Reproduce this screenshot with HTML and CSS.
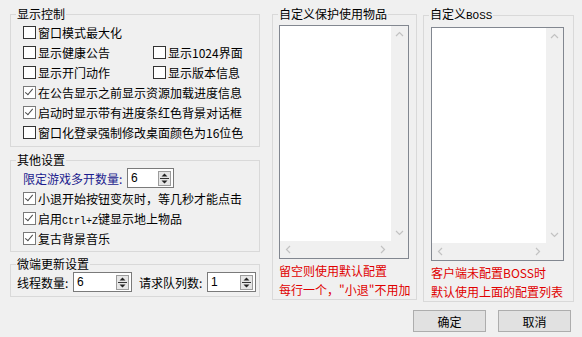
FILE: index.html
```html
<!DOCTYPE html>
<html lang="zh-CN">
<head>
    <meta charset="UTF-8">
    <title>设置</title>
    <link rel="stylesheet" href="styles.css">
</head>
<body>
    <div class="dialog">
        <div class="main">
            <div class="left">
                <fieldset class="group">
                    <legend>显示控制</legend>
                    <div class="inner g-display">
                        <div class="row"><label class="chk"><span class="box"></span>窗口模式最大化</label></div>
                        <div class="row"><label class="chk col1"><span class="box"></span>显示健康公告</label><label class="chk"><span class="box"></span>显示1024界面</label></div>
                        <div class="row"><label class="chk col1"><span class="box"></span>显示开门动作</label><label class="chk"><span class="box"></span>显示版本信息</label></div>
                        <div class="row"><label class="chk"><span class="box on"></span>在公告显示之前显示资源加载进度信息</label></div>
                        <div class="row"><label class="chk"><span class="box on"></span>启动时显示带有进度条红色背景对话框</label></div>
                        <div class="row"><label class="chk"><span class="box"></span>窗口化登录强制修改桌面颜色为16位色</label></div>
                    </div>
                </fieldset>

                <fieldset class="group g-other">
                    <legend>其他设置</legend>
                    <div class="inner g-display-2">
                        <div class="row">
                            <span class="lbl blue w104">限定游戏多开数量:</span>
                            <span class="spin w47"><span class="val">6</span><span class="spin-btn"><svg width="13" height="15" viewBox="0 0 13 15"><rect x=".5" y=".5" width="12" height="14" fill="#e6e6e6" stroke="#9c9c9c"/><path d="M6.5 2.5L3.5 5.5h6z M3.5 9.5h6l-3 3z" fill="#222"/><path d="M2 7.5h9" stroke="#333"/></svg></span></span>
                        </div>
                        <div class="row"><label class="chk"><span class="box on"></span>小退开始按钮变灰时，等几秒才能点击</label></div>
                        <div class="row"><label class="chk"><span class="box on"></span><span>启用<span class="mono">Ctrl+Z</span>键显示地上物品</span></label></div>
                        <div class="row"><label class="chk"><span class="box on"></span>复古背景音乐</label></div>
                    </div>
                </fieldset>

                <fieldset class="group g-update">
                    <legend>微端更新设置</legend>
                    <div class="inner g-update-body">
                        <div class="row">
                            <span class="lbl w56">线程数量:</span>
                            <span class="spin w59"><span class="val">6</span><span class="spin-btn"><svg width="13" height="15" viewBox="0 0 13 15"><rect x=".5" y=".5" width="12" height="14" fill="#e6e6e6" stroke="#9c9c9c"/><path d="M6.5 2.5L3.5 5.5h6z M3.5 9.5h6l-3 3z" fill="#222"/><path d="M2 7.5h9" stroke="#333"/></svg></span></span>
                            <span class="lbl w68 gap7">请求队列数:</span>
                            <span class="spin w49"><span class="val">1</span><span class="spin-btn"><svg width="13" height="15" viewBox="0 0 13 15"><rect x=".5" y=".5" width="12" height="14" fill="#e6e6e6" stroke="#9c9c9c"/><path d="M6.5 2.5L3.5 5.5h6z M3.5 9.5h6l-3 3z" fill="#222"/><path d="M2 7.5h9" stroke="#333"/></svg></span></span>
                        </div>
                    </div>
                </fieldset>
            </div>

            <fieldset class="group side side-items">
                <legend>自定义保护使用物品</legend>
                <div class="inner side-body">
                    <div class="list w130">
                        <div class="list-area"></div>
                        <div class="vbar">
                            <svg width="17" height="17" viewBox="0 0 17 17"><path d="M5 10l3.5-3.5 3.5 3.5" stroke="#c2c2c2" fill="none" stroke-width="1.2"/></svg>
                            <svg width="17" height="17" viewBox="0 0 17 17"><path d="M5 7l3.5 3.5 3.5-3.5" stroke="#c2c2c2" fill="none" stroke-width="1.2"/></svg>
                        </div>
                        <div class="hbar">
                            <svg width="17" height="17" viewBox="0 0 17 17"><path d="M10 5l-3.5 3.5 3.5 3.5" stroke="#c2c2c2" fill="none" stroke-width="1.2"/></svg>
                            <svg width="17" height="17" viewBox="0 0 17 17"><path d="M7 5l3.5 3.5-3.5 3.5" stroke="#c2c2c2" fill="none" stroke-width="1.2"/></svg>
                        </div>
                        <div class="corner"></div>
                    </div>
                    <div class="note">留空则使用默认配置<br>每行一个，"小退"不用加</div>
                </div>
            </fieldset>

            <fieldset class="group side side-boss">
                <legend>自定义<span class="mono mono-lg">BOSS</span></legend>
                <div class="inner side-body">
                    <div class="list w133">
                        <div class="list-area"></div>
                        <div class="vbar">
                            <svg width="17" height="17" viewBox="0 0 17 17"><path d="M5 10l3.5-3.5 3.5 3.5" stroke="#c2c2c2" fill="none" stroke-width="1.2"/></svg>
                            <svg width="17" height="17" viewBox="0 0 17 17"><path d="M5 7l3.5 3.5 3.5-3.5" stroke="#c2c2c2" fill="none" stroke-width="1.2"/></svg>
                        </div>
                        <div class="hbar">
                            <svg width="17" height="17" viewBox="0 0 17 17"><path d="M10 5l-3.5 3.5 3.5 3.5" stroke="#c2c2c2" fill="none" stroke-width="1.2"/></svg>
                            <svg width="17" height="17" viewBox="0 0 17 17"><path d="M7 5l3.5 3.5-3.5 3.5" stroke="#c2c2c2" fill="none" stroke-width="1.2"/></svg>
                        </div>
                        <div class="corner"></div>
                    </div>
                    <div class="note">客户端未配置BOSS时<br>默认使用上面的配置列表</div>
                </div>
            </fieldset>
        </div>

        <div class="actions">
            <button class="btn">确定</button>
            <button class="btn">取消</button>
        </div>
    </div>
</body>
</html>
```

FILE: styles.css
```css
body {
    margin: 0;
    background: #f0f0f0;
    color: #000;
    font-family: "Noto Sans CJK SC", "Liberation Sans", sans-serif;
    font-size: 12px;
}
.dialog {
    padding: 6px 0 0 10px;
}
.main {
    display: flex;
    align-items: flex-start;
}
.left {
    width: 250px;
    display: flex;
    flex-direction: column;
}
.group {
    margin: 0;
    padding: 0;
    border: 1px solid #d9d9d9;
    min-width: 0;
}
.group legend {
    margin-left: 5px;
    padding: 0 1px;
    line-height: 16px;
}
.mono {
    font-family: "Liberation Mono", monospace;
    font-size: 10px;
}
.mono-lg {
    font-size: 11px;
}
.g-display {
    padding: 0 0 4px 12px;
}
.g-other {
    margin-top: 5px;
}
.g-display-2 {
    padding: 0 0 3px 12px;
}
.g-update {
    margin-top: 4px;
}
.g-update-body {
    padding: 0 0 4px 6px;
}
.row {
    display: flex;
    align-items: center;
    height: 20px;
}
.chk {
    display: flex;
    align-items: center;
    gap: 2px;
    white-space: nowrap;
}
.col1 {
    width: 130px;
}
.box {
    position: relative;
    flex: none;
    width: 11px;
    height: 11px;
    border: 1px solid #333;
    background: #fff;
}
.box.on {
    border-color: #7a7a7a;
}
.box.on::after {
    content: "";
    position: absolute;
    left: 3px;
    top: 0;
    width: 3px;
    height: 7px;
    border: solid #4a4a4a;
    border-width: 0 1.5px 1.5px 0;
    transform: rotate(40deg);
}
.lbl {
    white-space: nowrap;
}
.blue {
    color: #1c1c8e;
}
.w104 { width: 104px; }
.w56 { width: 56px; }
.w68 { width: 68px; }
.gap7 { margin-left: 7px; }
.spin {
    display: flex;
    align-items: center;
    justify-content: space-between;
    box-sizing: border-box;
    height: 20px;
    border: 1px solid #7a7a7a;
    background: #fff;
    padding: 0 2px 0 3px;
}
.w47 { width: 47px; }
.w59 { width: 59px; }
.w49 { width: 49px; }
.val {
    font-family: "Liberation Sans", sans-serif;
    font-size: 12px;
}
.spin-btn {
    display: flex;
}
.side {
    margin-left: 12px;
    width: 145px;
    box-sizing: border-box;
}
.side-boss {
    margin-left: 6px;
    width: 151px;
}
.side-body {
    padding: 3px 0 0 6px;
}
.side-boss .side-body {
    padding-left: 7px;
}
.list {
    display: grid;
    grid-template-columns: 1fr 17px;
    grid-template-rows: 1fr 17px;
    box-sizing: border-box;
    height: 234px;
    border: 1px solid #828790;
    background: #fff;
}
.w130 { width: 130px; }
.w133 { width: 133px; }
.vbar {
    display: flex;
    flex-direction: column;
    justify-content: space-between;
    background: #f0f0f0;
}
.hbar {
    display: flex;
    justify-content: space-between;
    background: #f0f0f0;
}
.corner {
    background: #f0f0f0;
}
.note {
    margin-top: 2px;
    color: #e00000;
    line-height: 19px;
    white-space: nowrap;
}
.actions {
    display: flex;
    justify-content: flex-end;
    gap: 12px;
    margin-top: 8px;
    padding-right: 11px;
}
.btn {
    width: 73px;
    height: 22px;
    padding: 0;
    border: 1px solid #adadad;
    background: #e1e1e1;
    font-family: inherit;
    font-size: 12px;
    color: #000;
}
```
